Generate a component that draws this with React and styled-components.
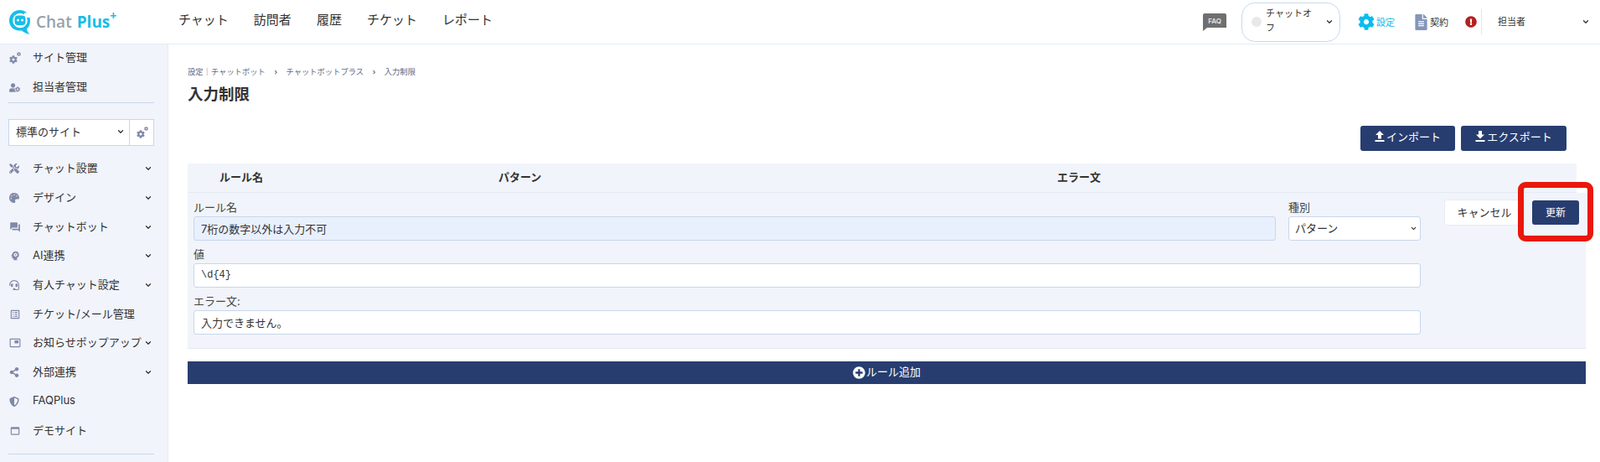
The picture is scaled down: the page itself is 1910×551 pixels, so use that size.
import React from "react";
import styled, { createGlobalStyle } from "styled-components";
import { ChevronDown } from "lucide-react";
import {
  FaUserCog, FaTools, FaPalette, FaHeadset, FaShareAlt, FaShieldAlt,
  FaCog, FaFileAlt, FaExclamationCircle, FaPlusCircle,
} from "react-icons/fa";
import { MdForum, MdPictureInPicture, MdListAlt, MdPsychology, MdWebAsset } from "react-icons/md";

const Global = createGlobalStyle`
  html, body { margin: 0; padding: 0; height: 100%; overflow: hidden; background: #fff; }
  body { font-family: "Inter", "Noto Sans CJK JP", sans-serif; color: #333; font-size: 13px; }
  * { box-sizing: border-box; }
`;

const Page = styled.div`
  width: 1910px;
  height: 551px;
  display: flex;
  flex-direction: column;
  overflow: hidden;
`;

const Header = styled.header`
  height: 53px;
  flex: none;
  display: flex;
  align-items: center;
  border-bottom: 1px solid #e4eaf4;
  background: #fff;
`;

const Logo = styled.div`
  width: 213px;
  flex: none;
  padding-left: 10px;
  display: flex;
  align-items: center;
  gap: 6px;
`;

const LogoText = styled.div`
  font-family: "Open Sans", sans-serif;
  font-size: 19px;
  font-weight: 600;
  letter-spacing: 0;
  color: #98a1a8;
  white-space: nowrap;
  display: flex;
  align-items: flex-start;
`;

const LogoPlus = styled.span`
  color: #18bde6;
  font-weight: 700;
  margin-left: 6px;
`;

const LogoSup = styled.span`
  color: #18bde6;
  font-size: 14px;
  line-height: 14px;
  font-weight: 700;
  margin-top: -1px;
`;

const TopNav = styled.nav`
  display: flex;
  gap: 30px;
  flex: 1;
  padding-bottom: 8px;
`;

const TopLink = styled.a`
  font-size: 15px;
  color: #333;
  white-space: nowrap;
`;

const HeaderRight = styled.div`
  display: flex;
  align-items: center;
  flex: none;
  height: 100%;
`;

const FaqIcon = styled.svg`
  width: 28px;
  height: 21px;
  margin-right: 18px;
  display: block;
`;

const ChatToggle = styled.div`
  width: 118px;
  height: 47px;
  border: 1px solid #c9d8f0;
  border-radius: 16px;
  display: flex;
  align-items: center;
  padding-left: 11px;
  margin-right: 21px;
`;

const StatusDot = styled.span`
  width: 12px;
  height: 12px;
  border-radius: 50%;
  background: #e8e8e8;
  flex: none;
`;

const ToggleText = styled.span`
  font-size: 11px;
  line-height: 17px;
  width: 60px;
  margin-left: 5px;
  margin-bottom: 2px;
  flex: none;
`;

const ChevronSlot = styled.span`
  display: inline-flex;
  color: #333;
  margin-left: ${(p) => p.$ml || 0}px;
  margin-right: ${(p) => p.$mr || 0}px;
  flex: none;
`;

const HeadLink = styled.a`
  display: flex;
  align-items: center;
  gap: ${(p) => p.$gap}px;
  font-size: 11px;
  color: ${(p) => p.$color};
  margin-right: ${(p) => p.$mr}px;
  white-space: nowrap;
`;

const AlertSlot = styled.span`
  display: inline-flex;
  color: #b3201f;
  margin-right: 5px;
`;

const UserBox = styled.div`
  height: 30px;
  width: 142px;
  border-left: 1px solid #dfe6f2;
  padding-left: 19px;
  display: flex;
  align-items: center;
  font-size: 11px;
  color: #333;
`;

const UserName = styled.span`
  flex: 1;
  margin-bottom: 3px;
`;

const Body = styled.div`
  flex: 1;
  display: flex;
  min-height: 0;
`;

const Sidebar = styled.aside`
  width: 201px;
  flex: none;
  background: #f1f4fa;
  border-right: 1px solid #e4eaf4;
  padding: 0 16px 0 10px;
  overflow: hidden;
`;

const SideItem = styled.a`
  display: flex;
  align-items: center;
  height: ${(p) => p.$h || 34.7}px;
  margin-bottom: ${(p) => p.$mb || 0}px;
  font-size: 13px;
  color: #333;
  white-space: nowrap;
`;

const SideIcon = styled.span`
  width: 29px;
  flex: none;
  display: inline-flex;
  align-items: center;
  padding-left: 1px;
  color: #8089a8;
`;

const SideLabel = styled.span`
  flex: 1;
  margin-bottom: 3px;
`;

const SideDivider = styled.div`
  height: 1px;
  background: #c9d6ec;
  margin-top: ${(p) => p.$mt}px;
`;

const SiteSelect = styled.div`
  height: 32px;
  display: flex;
  margin: 19px 0 10px;
  background: #fff;
  border: 1px solid #c9d6ec;
`;

const SiteName = styled.div`
  flex: 1;
  display: flex;
  align-items: center;
  justify-content: space-between;
  padding: 0 5px 3px 8px;
  font-size: 13px;
  border-right: 1px solid #c9d6ec;
`;

const SiteGear = styled.div`
  width: 28px;
  display: flex;
  align-items: center;
  justify-content: center;
  color: #8089a8;
`;

const GearWrap = styled.span`
  position: relative;
  display: inline-flex;
  width: 13px;
  height: 13px;
  align-items: flex-end;
`;

const SmallGear = styled.span`
  position: absolute;
  right: -1px;
  top: -1px;
  display: inline-flex;
`;

const Main = styled.main`
  flex: 1;
  min-width: 0;
  padding: 27px 17px 0 23px;
`;

const Breadcrumb = styled.div`
  display: flex;
  font-size: 9.3px;
  line-height: 12px;
  color: #5f6b85;
  white-space: nowrap;
`;

const Crumb = styled.span`
  &:not(:last-child)::after {
    content: "›";
    margin: 0 10.5px;
    color: #333;
  }
`;

const Title = styled.h1`
  margin: 7px 0 0;
  font-size: 18.5px;
  line-height: 26px;
  font-weight: 700;
  color: #333;
`;

const Toolbar = styled.div`
  display: flex;
  justify-content: flex-end;
  gap: 7px;
  margin: 25px 23px 15px 0;
`;

const DarkButton = styled.button`
  height: ${(p) => p.$h || 30}px;
  width: ${(p) => p.$w}px;
  flex: none;
  border: 0;
  border-radius: 3px;
  background: #273d70;
  color: #fff;
  font-family: inherit;
  font-size: ${(p) => p.$fs || 13}px;
  display: flex;
  align-items: center;
  justify-content: center;
  gap: 2px;
  padding: 0 0 ${(p) => p.$pb ?? 5}px;
`;

const TableHead = styled.div`
  width: 1658px;
  height: 35px;
  background: #f1f4fa;
  border-bottom: 1px solid #e5e9f1;
  display: grid;
  grid-template-columns: 333px 667px 1fr;
  padding: 0 0 3px 38px;
  align-items: center;
  font-weight: 700;
  font-size: 13px;
`;

const EditRow = styled.div`
  position: relative;
  display: flex;
  align-items: flex-start;
  background: #f1f4fa;
  border-bottom: 1px solid #e5e9f1;
  padding: 10px 0 16px 7px;
`;

const Fields = styled.div`
  width: 1465px;
  flex: none;
  display: grid;
  grid-template-columns: 1292px 158px;
  column-gap: 15px;
`;

const Field = styled.label`
  display: block;
  grid-column: ${(p) => (p.$wide ? "1 / -1" : "auto")};
  margin-top: ${(p) => (p.$first ? 0 : 9)}px;
`;

const FieldLabel = styled.span`
  display: block;
  font-size: 13px;
  line-height: 15px;
  padding-bottom: 3px;
  color: #444;
`;

const TextInput = styled.input`
  display: block;
  width: 100%;
  height: 29px;
  border: 1px solid #c9d6ec;
  border-radius: 3px;
  background: ${(p) => (p.$filled ? "#e8f0fe" : "#fff")};
  padding: 0 0 1px 8px;
  color: #333;
  font-size: ${(p) => (p.$mono ? 12 : 13)}px;
  font-family: ${(p) => (p.$mono ? '"Liberation Mono", monospace' : "inherit")};
  outline: none;
`;

const SelectWrap = styled.span`
  position: relative;
  display: block;
`;

const SelectArrow = styled.span`
  position: absolute;
  right: 4px;
  top: 10px;
  display: inline-flex;
  color: #333;
  pointer-events: none;
`;

const TypeSelect = styled.select`
  display: block;
  width: 100%;
  height: 29px;
  border: 1px solid #c9d6ec;
  border-radius: 3px;
  background: #fff;
  padding: 0 0 2px 7px;
  color: #333;
  font-size: 13px;
  font-family: inherit;
  outline: none;
  appearance: none;
`;

const Actions = styled.div`
  display: flex;
  align-items: center;
  gap: 9px;
  margin-left: 28px;
  margin-top: -2px;
`;

const CancelButton = styled.button`
  width: 96px;
  height: 31px;
  flex: none;
  border: 1px solid #e7ebf3;
  border-radius: 3px;
  background: #fff;
  color: #333;
  font-family: inherit;
  font-size: 13px;
  padding: 0 0 3px;
`;

const Highlight = styled.div`
  position: absolute;
  left: 1588px;
  top: -13px;
  width: 90px;
  height: 71px;
  border: 7px solid #e8180c;
  border-radius: 9px;
  pointer-events: none;
`;

const AddButton = styled.button`
  display: flex;
  width: 100%;
  height: 27px;
  margin-top: 15px;
  border: 0;
  background: #273d70;
  color: #fff;
  align-items: center;
  justify-content: center;
  gap: 1px;
  font-family: inherit;
  font-size: 13px;
  padding: 0 0 5px;
`;

const PlusIcon = styled.span`
  display: inline-flex;
  border-radius: 50%;
  color: #fff;
  margin-top: 4px;
`;

const Chev = ({ size = 10 }) => <ChevronDown size={size} strokeWidth={3} />;

const Gears = () => (
  <GearWrap>
    <FaCog size={10} />
    <SmallGear><FaCog size={5} /></SmallGear>
  </GearWrap>
);

const ArrowIcon = ({ down }) => (
  <svg width="12" height="13" viewBox="0 0 12 13" fill="#fff">
    {down ? <path d="M4 0h4v4.500h3L6 9.500 1 4.500h3Z" /> : <path d="M6 0l5 5H8v4.500H4V5H1Z" />}
    <rect x="0.500" y="11" width="11" height="2" />
  </svg>
);

const sideItems = [
  { icon: <FaTools size={12} />, label: "チャット設置", more: true },
  { icon: <FaPalette size={12} />, label: "デザイン", more: true },
  { icon: <MdForum size={14} />, label: "チャットボット", more: true },
  { icon: <MdPsychology size={14} />, label: "AI連携", more: true },
  { icon: <FaHeadset size={12} />, label: "有人チャット設定", more: true },
  { icon: <MdListAlt size={14} />, label: "チケット/メール管理" },
  { icon: <MdPictureInPicture size={14} />, label: "お知らせポップアップ", more: true },
  { icon: <FaShareAlt size={12} />, label: "外部連携", more: true },
  { icon: <FaShieldAlt size={12} />, label: "FAQPlus" },
  { icon: <MdWebAsset size={14} />, label: "デモサイト" },
];

export default function App() {
  return (
    <Page>
      <Global />
      <Header>
        <Logo>
          <svg width="27" height="30" viewBox="0 0 27 30">
            <path d="M13.500 1C6.500 1 1 6.500 1 13.500S6.500 25.500 13 25.500h3c2.500 2.200 5.500 3.800 9.500 4.500-2-1.800-3-3.800-3.500-6.500 2.800-2.300 4-5.800 4-10C26 6.500 20.500 1 13.500 1Z" fill="#16bfe8" />
            <circle cx="14" cy="13.500" r="8.800" fill="#fff" />
            <path d="M19 4.500h6V10h-6Z" fill="#fff" />
            <rect x="7.500" y="7.500" width="13" height="11.500" rx="4" fill="#16bfe8" />
            <circle cx="11.500" cy="13" r="1.500" fill="#fff" />
            <circle cx="16.500" cy="13" r="1.500" fill="#fff" />
          </svg>
          <LogoText>
            Chat<LogoPlus>Plus</LogoPlus>
            <LogoSup>+</LogoSup>
          </LogoText>
        </Logo>
        <TopNav>
          {["チャット", "訪問者", "履歴", "チケット", "レポート"].map((t) => (
            <TopLink key={t}>{t}</TopLink>
          ))}
        </TopNav>
        <HeaderRight>
          <FaqIcon viewBox="0 0 28 21">
            <path d="M2 0h24a2 2 0 0 1 2 2v15H5l-5 4V2a2 2 0 0 1 2-2Z" fill="#6f6f6f" />
            <text x="14" y="12" textAnchor="middle" fontSize="8" fontWeight="600" fill="#e6e6e6" fontFamily="Inter, sans-serif">FAQ</text>
          </FaqIcon>
          <ChatToggle>
            <StatusDot />
            <ToggleText>チャットオフ</ToggleText>
            <ChevronSlot $ml={11}><Chev /></ChevronSlot>
          </ChatToggle>
          <HeadLink $gap={2} $color="#18b6e6" $mr={22}>
            <FaCog size={20} color="#09bdf0" />設定
          </HeadLink>
          <HeadLink $gap={1} $color="#333" $mr={20}>
            <FaFileAlt size={19} color="#8496b8" />契約
          </HeadLink>
          <AlertSlot><FaExclamationCircle size={14} /></AlertSlot>
          <UserBox>
            <UserName>担当者</UserName>
            <ChevronSlot $mr={12}><Chev /></ChevronSlot>
          </UserBox>
        </HeaderRight>
      </Header>
      <Body>
        <Sidebar>
          <SideItem $h={32} $mb={4}>
            <SideIcon><Gears /></SideIcon>
            <SideLabel>サイト管理</SideLabel>
          </SideItem>
          <SideItem $h={30}>
            <SideIcon><FaUserCog size={13} /></SideIcon>
            <SideLabel>担当者管理</SideLabel>
          </SideItem>
          <SideDivider $mt={3} />
          <SiteSelect>
            <SiteName>標準のサイト<Chev /></SiteName>
            <SiteGear><Gears /></SiteGear>
          </SiteSelect>
          {sideItems.map((it) => (
            <SideItem key={it.label}>
              <SideIcon>{it.icon}</SideIcon>
              <SideLabel>{it.label}</SideLabel>
              {it.more && <ChevronSlot $mr={2}><Chev /></ChevronSlot>}
            </SideItem>
          ))}
          <SideDivider $mt={10} />
        </Sidebar>
        <Main>
          <Breadcrumb>
            <Crumb>設定｜チャットボット</Crumb>
            <Crumb>チャットボットプラス</Crumb>
            <Crumb>入力制限</Crumb>
          </Breadcrumb>
          <Title>入力制限</Title>
          <Toolbar>
            <DarkButton $w={113}><ArrowIcon />インポート</DarkButton>
            <DarkButton $w={126}><ArrowIcon down />エクスポート</DarkButton>
          </Toolbar>
          <TableHead>
            <span>ルール名</span>
            <span>パターン</span>
            <span>エラー文</span>
          </TableHead>
          <EditRow>
            <Fields>
              <Field $first>
                <FieldLabel>ルール名</FieldLabel>
                <TextInput $filled readOnly value="7桁の数字以外は入力不可" />
              </Field>
              <Field $first>
                <FieldLabel>種別</FieldLabel>
                <SelectWrap>
                  <TypeSelect defaultValue="pattern">
                    <option value="pattern">パターン</option>
                  </TypeSelect>
                  <SelectArrow><Chev size={9} /></SelectArrow>
                </SelectWrap>
              </Field>
              <Field $wide>
                <FieldLabel>値</FieldLabel>
                <TextInput $mono readOnly value="\d{4}" />
              </Field>
              <Field $wide>
                <FieldLabel>エラー文:</FieldLabel>
                <TextInput readOnly value="入力できません。" />
              </Field>
            </Fields>
            <Actions>
              <CancelButton>キャンセル</CancelButton>
              <DarkButton $w={56} $h={29} $fs={12} $pb={3}>更新</DarkButton>
            </Actions>
            <Highlight />
          </EditRow>
          <AddButton>
            <PlusIcon><FaPlusCircle size={15} /></PlusIcon>ルール追加
          </AddButton>
        </Main>
      </Body>
    </Page>
  );
}
